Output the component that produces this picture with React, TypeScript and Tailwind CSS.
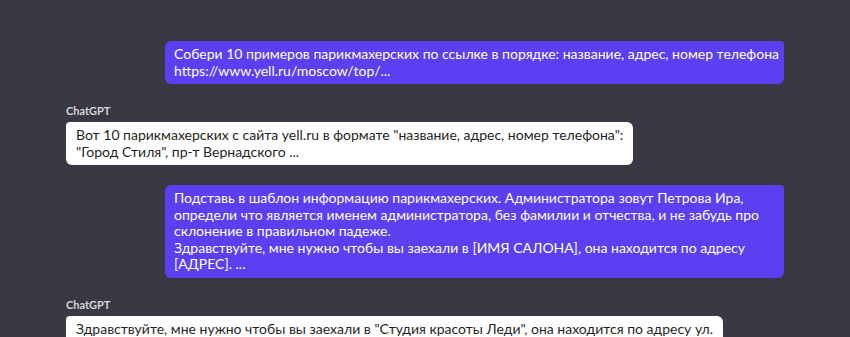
import React from 'react';

type Msg = { role: 'user' | 'assistant'; lines: string[] };

const messages: Msg[] = [
  {
    role: 'user',
    lines: [
      'Собери 10 примеров парикмахерских по ссылке в порядке: название, адрес, номер телефона',
      'https://www.yell.ru/moscow/top/...',
    ],
  },
  {
    role: 'assistant',
    lines: [
      'Вот 10 парикмахерских с сайта yell.ru в формате "название, адрес, номер телефона":',
      '"Город Стиля", пр-т Вернадского ...',
    ],
  },
  {
    role: 'user',
    lines: [
      'Подставь в шаблон информацию парикмахерских. Администратора зовут Петрова Ира,',
      'определи что является именем администратора, без фамилии и отчества, и не забудь про',
      'склонение в правильном падеже.',
      'Здравствуйте, мне нужно чтобы вы заехали в [ИМЯ САЛОНА], она находится по адресу',
      '[АДРЕС]. ...',
    ],
  },
  {
    role: 'assistant',
    lines: [
      'Здравствуйте, мне нужно чтобы вы заехали в "Студия красоты Леди", она находится по адресу ул.',
      'Ленина, д. 12 ...',
    ],
  },
];

export default function App() {
  return (
    <div
      className="w-[850px] h-[337px] overflow-hidden bg-[#393943] px-[66px] pt-[41px]"
      style={{ fontFamily: 'Lato, "Noto Sans", sans-serif' }}
    >
      <div className="flex flex-col gap-5">
        {messages.map((m, i) =>
          m.role === 'user' ? (
            <div key={i} className="flex justify-end">
              <div className="w-[619px] bg-[#5b3ff0] text-white rounded-md rounded-tr-sm px-[9px] py-[5px] text-[14px] leading-[16.5px]">
                {m.lines.map((l, j) => (
                  <p key={j} className="whitespace-nowrap">{l}</p>
                ))}
              </div>
            </div>
          ) : (
            <div key={i} className="flex flex-col items-start">
              <div className="text-[11px] leading-[14px] font-bold text-[#d4d4dc] mb-1">ChatGPT</div>
              <div className="bg-white text-[#1f1f24] rounded-md rounded-tl-sm px-[10px] py-[5px] text-[14px] leading-[16.5px]">
                {m.lines.map((l, j) => (
                  <p key={j} className="whitespace-nowrap">{l}</p>
                ))}
              </div>
            </div>
          )
        )}
      </div>
    </div>
  );
}
